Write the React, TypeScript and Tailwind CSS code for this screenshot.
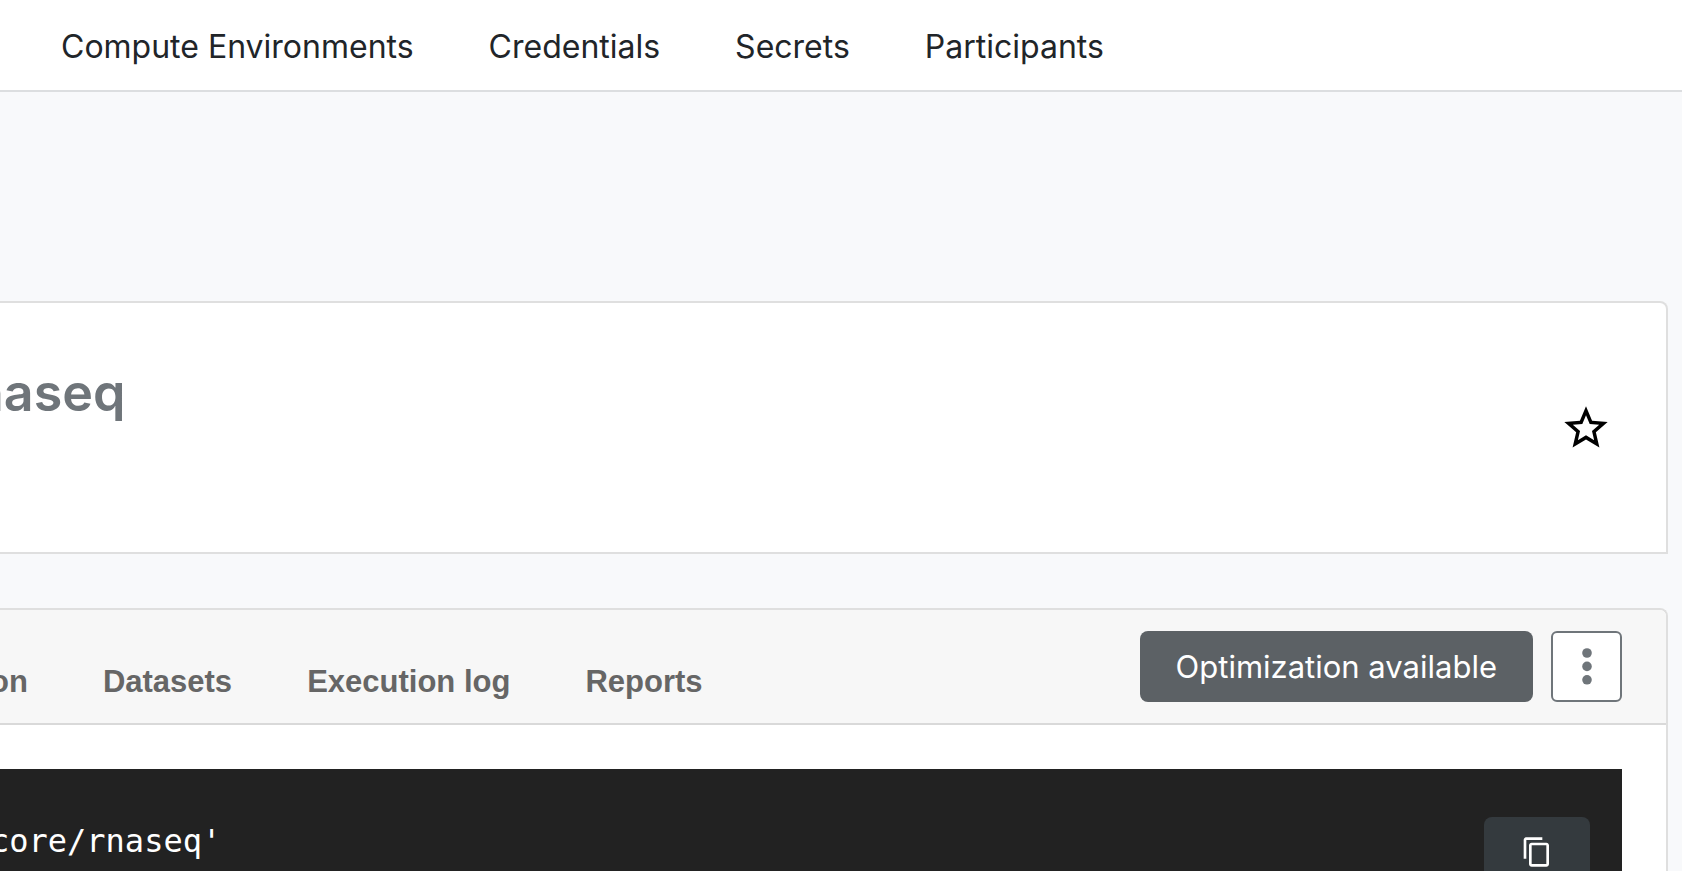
import React from "react";
import { MdContentCopy, MdStarBorder } from "react-icons/md";

const navItems = ["Compute Environments", "Credentials", "Secrets", "Participants"];
const tabs = ["on", "Datasets", "Execution log", "Reports"];

export default function App() {
  return (
    <div className="flex h-screen flex-col overflow-hidden bg-[#f8f9fb] font-['Inter',sans-serif] text-[32px] leading-10">
      <header className="shrink-0 border-b-2 border-[#dcdee0] bg-white pt-[27px] pb-[23px] pl-[61px]">
        <nav className="flex gap-[75px] text-[#212529]">
          {navItems.map((item) => (
            <a key={item} href="#" className="whitespace-nowrap">
              {item}
            </a>
          ))}
        </nav>
      </header>

      <main className="mt-[209px] mr-[14px] flex flex-col gap-[54px]">
        <section className="flex h-[253px] items-center justify-between rounded-tr-lg border-t-2 border-r-2 border-b-2 border-[#dfdfdf] bg-white pr-[54px]">
          <h1 className="-ml-7 pb-[70px] text-[52px] leading-[64px] font-semibold text-[#6f757a]">
            naseq
          </h1>
          <button type="button" aria-label="Favorite" className="text-black">
            <MdStarBorder size={52} />
          </button>
        </section>

        <section className="rounded-tr-lg border-t-2 border-r-2 border-[#dfdfdf] bg-white">
          <div className="flex items-start justify-between rounded-tr-md border-b-2 border-[#d9d9d9] bg-[#f7f7f7] pt-[21px] pr-11 pb-[21px]">
            <nav className="-ml-[10px] flex gap-[75px] pt-[31px] font-['Liberation_Sans',sans-serif] text-[31px] font-bold text-[#666666]">
              {tabs.map((tab) => (
                <a key={tab} href="#" className="whitespace-nowrap">
                  {tab}
                </a>
              ))}
            </nav>
            <div className="flex gap-[18px]">
              <button
                type="button"
                className="h-[71px] rounded-lg bg-[#5c6165] px-9 text-[31px] whitespace-nowrap text-white"
              >
                Optimization available
              </button>
              <button
                type="button"
                aria-label="More options"
                className="flex size-[71px] items-center justify-center rounded-md border-2 border-[#6f757a] bg-white text-[#6f757a]"
              >
                <svg width="10" height="40" viewBox="0 0 10 40" fill="currentColor">
                  <circle cx="5" cy="6" r="4.8" />
                  <circle cx="5" cy="19.4" r="4.8" />
                  <circle cx="5" cy="32.8" r="4.8" />
                </svg>
              </button>
            </div>
          </div>

          <div className="pt-11 pr-11">
            <div className="flex items-start justify-between bg-[#222222] pt-12 pr-8 pb-12">
              <pre className="-ml-[10px] pt-1 font-['DejaVu_Sans_Mono',monospace] text-[32px] text-white">
                core/rnaseq'
              </pre>
              <button
                type="button"
                aria-label="Copy command"
                className="flex h-[70px] w-[106px] items-center justify-center rounded-lg bg-[#343a3e] text-white"
              >
                <MdContentCopy size={32} />
              </button>
            </div>
          </div>
        </section>
      </main>
    </div>
  );
}
